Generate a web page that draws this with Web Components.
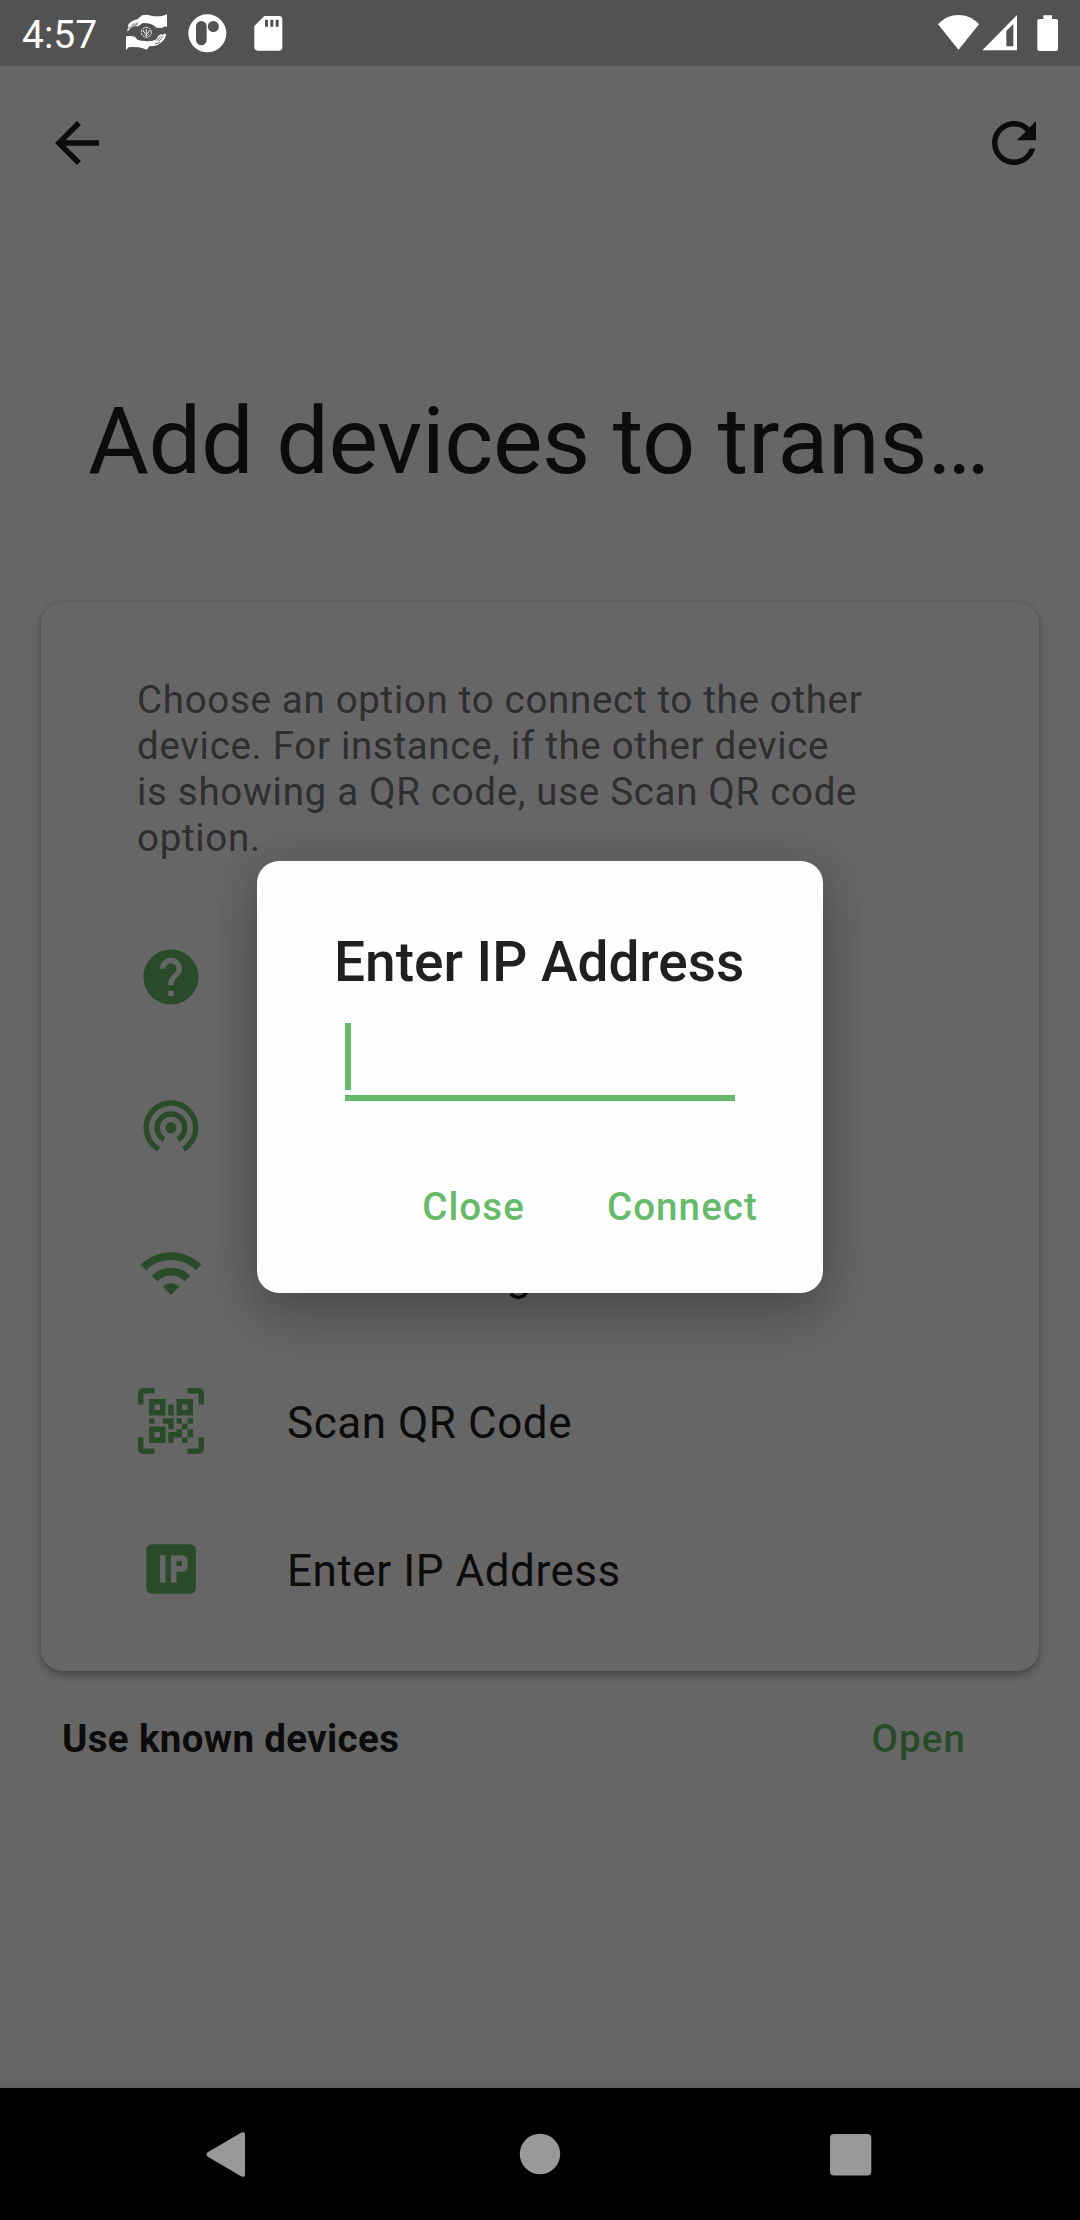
<!DOCTYPE html>
<html lang="en">
<head>
<meta charset="utf-8">
<title>Add devices</title>
<style>
html,body{margin:0;padding:0}
body{width:1080px;height:2220px;overflow:hidden;background:#fff;font-family:Roboto,"Liberation Sans",sans-serif}
</style>
</head>
<body>
<ts-screen></ts-screen>
<script>
const define=(name,html)=>{
  const t=document.createElement('template');
  t.innerHTML=html;
  customElements.define(name,class extends HTMLElement{
    constructor(){super();this.attachShadow({mode:'open'}).append(t.content.cloneNode(true));}
  });
};

const glyphs={
  back:'<path d="M20 11H7.83l5.59-5.59L12 4l-8 8 8 8 1.41-1.41L7.83 13H20v-2z"/>',
  refresh:'<path d="M17.65 6.35C16.2 4.9 14.21 4 12 4c-4.42 0-7.99 3.58-7.99 8s3.57 8 7.99 8c3.73 0 6.84-2.55 7.73-6h-2.08c-.82 2.33-3.04 4-5.65 4-3.31 0-6-2.69-6-6s2.69-6 6-6c1.66 0 3.14.69 4.22 1.78L13 11h7V4l-2.35 2.35z"/>',
  help:'<path d="M12 2C6.48 2 2 6.48 2 12s4.48 10 10 10 10-4.48 10-10S17.52 2 12 2zm1 17h-2v-2h2v2zm2.07-7.75l-.9.92C13.45 12.9 13 13.5 13 15h-2v-.5c0-1.1.45-2.1 1.17-2.83l1.24-1.26c.37-.36.59-.86.59-1.41 0-1.1-.9-2-2-2s-2 .9-2 2H8c0-2.21 1.79-4 4-4s4 1.79 4 4c0 .88-.36 1.68-.93 2.25z"/>',
  tether:'<path d="M12 11c-1.1 0-2 .9-2 2s.9 2 2 2 2-.9 2-2-.9-2-2-2zm6 2c0-3.31-2.69-6-6-6s-6 2.69-6 6c0 2.22 1.21 4.15 3 5.19l1-1.74c-1.19-.7-2-1.97-2-3.45 0-2.21 1.79-4 4-4s4 1.79 4 4c0 1.48-.81 2.75-2 3.45l1 1.74c1.79-1.04 3-2.97 3-5.19zM12 3C6.48 3 2 7.48 2 13c0 3.7 2.01 6.92 4.99 8.65l1-1.73C5.61 18.53 4 15.96 4 13c0-4.42 3.58-8 8-8s8 3.58 8 8c0 2.96-1.61 5.53-4 6.92l1 1.73c2.99-1.73 5-4.95 5-8.65 0-5.52-4.48-10-10-10z"/>',
  wifi:'<path d="M1 9l2 2c4.97-4.97 13.03-4.97 18 0l2-2C16.93 2.93 7.08 2.93 1 9zm8 8l3 3 3-3c-1.65-1.66-4.34-1.66-6 0zm-4-4l2 2c2.76-2.76 7.24-2.76 10 0l2-2C15.14 9.14 8.87 9.14 5 13z"/>',
  qr:'<path d="M0 6V2a2 2 0 0 1 2-2h4v2H2v4zM18 0h4a2 2 0 0 1 2 2v4h-2V2h-4zM0 18h2v4h4v2H2a2 2 0 0 1-2-2zM22 18h2v4a2 2 0 0 1-2 2h-4v-2h4z"/><path fill-rule="evenodd" d="M4 4h6v6H4zM6 6v2h2V6zM14 4h6v6h-6zM16 6v2h2V6zM4 14h6v6H4zM6 16v2h2v-2z"/><path d="M11 6h2v4h-2zM4 11h2v2H4zM9 11h4v4h-2v-2H9zM14 11h2v2h-2zM18 11h2v2h-2zM16 13h2v2h-2zM14 15h2v3h-3v2h-2v-4h3zM18 15h2v3h-2zM16 18h2v2h-2z"/>',
  ip:'<path fill-rule="evenodd" d="M5 3h14a2 2 0 0 1 2 2v14a2 2 0 0 1-2 2H5a2 2 0 0 1-2-2V5a2 2 0 0 1 2-2zM8 7v10h2V7zM12 7v10h2v-4h2a2 2 0 0 0 2-2V9a2 2 0 0 0-2-2zM14 9h2v2h-2z"/>'
};
customElements.define('ts-icon',class extends HTMLElement{
  constructor(){super();this.attachShadow({mode:'open'});}
  connectedCallback(){
    this.shadowRoot.innerHTML='<style>:host{display:block;width:66px;height:66px;flex:none}svg{display:block}</style><svg width="66" height="66" viewBox="0 0 24 24" fill="currentColor">'+glyphs[this.getAttribute('name')]+'</svg>';
  }
});

define('ts-status-bar',`<style>
:host{display:flex;box-sizing:border-box;height:66px;padding:0 20px 0 22px;background:#525252;color:#fff;align-items:center;position:relative;z-index:3}
.clock{font-size:39px;line-height:66px;width:104px;padding-top:2px;height:66px;box-sizing:border-box}
svg{display:block;flex:none;height:66px}
.grow{flex:1}
</style>
<span class="clock">4:57</span>
<svg width="164" viewBox="0 0 492 198" fill="#fff">
<path d="M123 42V81L117 79L108 84L92 83L80 74L66 70L50 69L42 75L36 79L24 79L14 85L7 92H3L8 80L5 78L10 70L20 62L35 57L48 46L62 44L84 49L104 49L116 46z"/>
<path d="M0 150V109L14 108L27 110L34 119L46 122L64 124L80 122L92 118L96 108L104 103L110 104L118 100L120 106L116 116L108 125L97 134L84 138L70 139L62 149L50 145L38 142L18 141L8 142z"/>
<path d="M8 87L24 70M16 84L33 68M27 79L38 68M92 123L104 108M98 125L112 108M86 132L102 128" stroke="#525252" stroke-width="2.500" fill="none"/>
<g fill="none" stroke="#fff"><circle cx="61" cy="97" r="15" stroke-width="3" stroke-dasharray="7 2.500"/><path d="M61 86v24M53 90v6l8 6M69 90v6l-8 6M54 103l4 4M68 103l-4 4" stroke-width="2.600"/></g>
<path fill-rule="evenodd" d="M244 43a57 57 0 1 1 0 114a57 57 0 1 1 0-114zM226 63a16 16 0 0 0-16 16v41a16 16 0 0 0 32 0V79a16 16 0 0 0-16-16zM262 63a16.500 16.500 0 1 0 0 33a16.500 16.500 0 1 0 0-33z"/>
<path fill-rule="evenodd" d="M415 48h44q10 0 10 10v84q0 10-10 10h-64q-10 0-10-10V78zM417 59v21h9V59zM433 59v21h9V59zM449 59v21h9V59z"/>
</svg>
<span class="grow"></span>
<svg width="122" viewBox="0 0 366 198" fill="#fff">
<path d="M0 73C34 36 89 36 123 73L61.500 149z"/>
<path fill-rule="evenodd" d="M133 151L237 45V151zM205 93V139H226V72z"/>
<path d="M316 46h26v11h12q6 0 6 6v84q0 6-6 6h-50q-6 0-6-6V63q0-6 6-6h12z"/>
</svg>`);

define('ts-toolbar',`<style>
:host{display:flex;box-sizing:border-box;height:154px;padding:0 33px 0 44px;align-items:center;justify-content:space-between;color:#202020}
</style><ts-icon name="back"></ts-icon><ts-icon name="refresh"></ts-icon>`);

define('ts-title',`<style>
:host{display:block;margin:166px 88px 106px;font-size:93.5px;line-height:110px;letter-spacing:-.38px;color:#202020;white-space:nowrap}
</style><slot></slot>`);

define('ts-card',`<style>
:host{display:block;box-sizing:border-box;margin:0 41px;height:1069px;padding:75px 96px 0;border-radius:22px;background:#fff;box-shadow:0 5px 8px rgba(0,0,0,.26),0 0 4px rgba(0,0,0,.16)}
</style><slot></slot>`);

define('ts-hint',`<style>
:host{display:block;height:184px;margin-bottom:42px;font-size:38.5px;line-height:46px;letter-spacing:.69px;color:#757575;white-space:pre-line}
</style><slot></slot>`);

define('ts-option',`<style>
:host{display:flex;height:148px;align-items:center;gap:83px;color:#66bb6a}
span{font-size:44px;line-height:52px;padding-top:4px;letter-spacing:.55px;color:#202020;white-space:nowrap}
ts-icon{margin-left:1px}
::slotted(ts-icon){margin-left:1px}
</style><slot name="icon"></slot><span><slot></slot></span>`);

define('ts-footer',`<style>
:host{display:flex;justify-content:space-between;margin:42px 114px 0 62px;font-size:38.5px;line-height:52px}
.b{font-weight:700;color:#202020;letter-spacing:.35px}
.g{font-weight:500;color:#66bb6a;letter-spacing:1.1px}
</style><span class="b"><slot></slot></span><span class="g"><slot name="action"></slot></span>`);

define('ts-scrim',`<style>
:host{position:absolute;inset:0;display:flex;background:rgba(0,0,0,.6);z-index:1}
</style><slot></slot>`);

define('ts-dialog',`<style>
:host{display:block;box-sizing:border-box;position:absolute;left:257px;top:861px;width:566px;height:432px;border-radius:22px;background:#fefefe;box-shadow:0 24px 50px rgba(0,0,0,.22),0 0 40px rgba(0,0,0,.12);z-index:2}
.t{padding:69px 0 0 77px;font-size:55px;font-weight:500;line-height:64px;color:#202020;white-space:nowrap}
.f{margin:29px 88px 0;border-bottom:6px solid #66bb6a;height:72px}
.c{width:6px;height:67px;background:#66bb6a}
.a{display:flex;justify-content:flex-end;gap:82px;padding:80px 65px 0 0;font-size:38.5px;line-height:52px;font-weight:500;color:#66bb6a;letter-spacing:1.1px}
</style><div class="t"><slot></slot></div><div class="f"><div class="c"></div></div><div class="a"><slot name="action"></slot></div>`);

define('ts-nav-bar',`<style>
:host{display:flex;box-sizing:border-box;height:132px;background:#000;z-index:3;position:relative;justify-content:space-between;padding:0 208px 0 206px}
svg{display:block}
.home{margin-left:4px}
</style>
<svg width="40" height="132" viewBox="0 0 40 132" fill="#999"><path d="M1.800 64.300L35 44.800Q39 42.800 39 47V86Q39 90.200 35 88.200L1.800 68.700Q-.8 66.500 1.800 64.300z"/></svg>
<svg class="home" width="42" height="132" viewBox="0 0 42 132" fill="#999"><circle cx="21" cy="66" r="20.200"/></svg>
<svg width="42" height="132" viewBox="0 0 42 132" fill="#999"><rect x="0" y="46" width="41.300" height="41.500" rx="4"/></svg>`);

define('ts-screen',`<style>
:host{display:flex;flex-direction:column;position:relative;width:1080px;height:2220px;background:#fff}
main{flex:1;min-height:0}
.edge{height:8px;background:linear-gradient(transparent,rgba(0,0,0,.08))}
</style>
<ts-status-bar></ts-status-bar>
<main>
<ts-toolbar></ts-toolbar>
<ts-title>Add devices to trans…</ts-title>
<ts-card>
<ts-hint>Choose an option to connect to the other
device. For instance, if the other device
is showing a QR code, use Scan QR code
option.</ts-hint>
<ts-option><ts-icon slot="icon" name="help"></ts-icon></ts-option>
<ts-option><ts-icon slot="icon" name="tether"></ts-icon></ts-option>
<ts-option><ts-icon slot="icon" name="wifi"></ts-icon>Use existing network</ts-option>
<ts-option><ts-icon slot="icon" name="qr"></ts-icon>Scan QR Code</ts-option>
<ts-option><ts-icon slot="icon" name="ip"></ts-icon>Enter IP Address</ts-option>
</ts-card>
<ts-footer>Use known devices<span slot="action">Open</span></ts-footer>
</main>
<div class="edge"></div>
<ts-scrim></ts-scrim>
<ts-dialog>Enter IP Address<span slot="action">Close</span><span slot="action">Connect</span></ts-dialog>
<ts-nav-bar></ts-nav-bar>`);
</script>
</body>
</html>
